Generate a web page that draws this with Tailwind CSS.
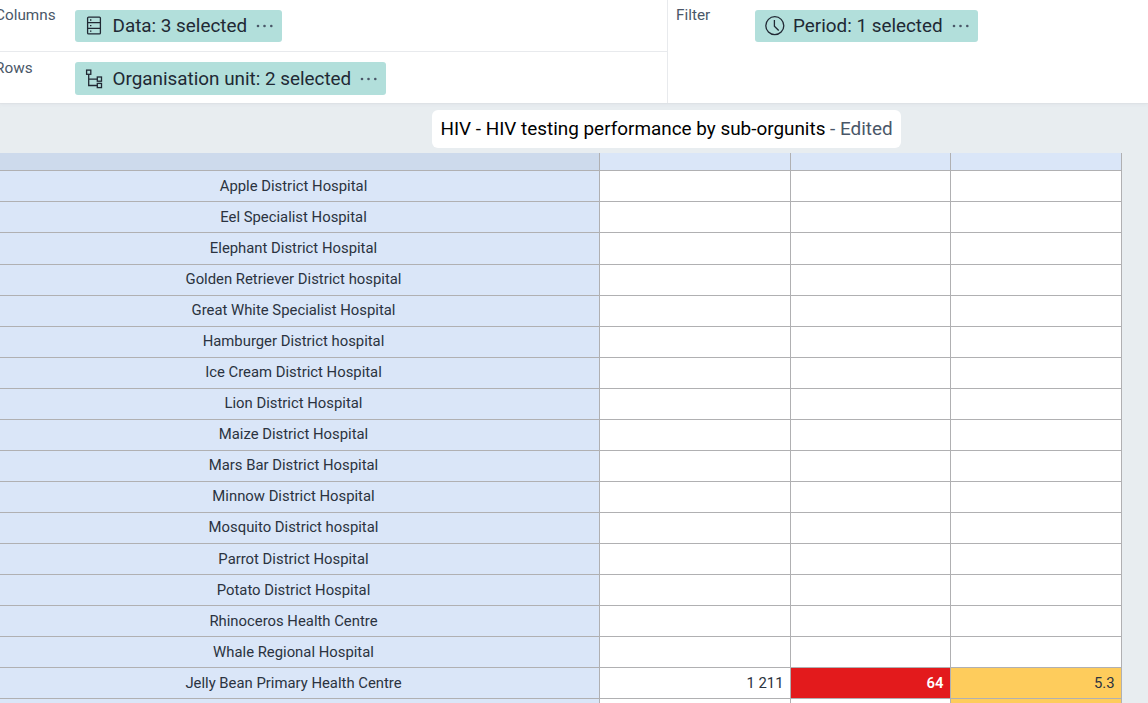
<!DOCTYPE html>
<html lang="en">
<head>
<meta charset="utf-8">
<title>HIV testing performance</title>
<script src="https://cdn.jsdelivr.net/npm/@tailwindcss/browser@4"></script>
</head>
<body class="h-[703px] w-[1148px] overflow-hidden bg-[#e8edf0] font-[Roboto,sans-serif] text-[#212934]">
<div class="flex h-[703px] flex-col overflow-hidden">
  <header class="flex h-[103px] shrink-0 bg-white shadow-[0_1px_3px_#d5dae080,0_1px_0_#e3e6ea]">
    <div class="w-[668px] border-r border-[#e8eaed]">
      <section class="flex h-[52px] border-b border-[#e8eaed]">
        <h2 class="-ml-[5px] w-20 shrink-0 pt-[5px] text-[15.3px] leading-5 text-[#4a5768]">Columns</h2>
        <button class="mt-[10px] flex h-8 w-[207px] items-center rounded-[3px] bg-[#b2dfdb] pl-[10px] text-[18.88px] whitespace-nowrap">
          <svg class="mr-[7.5px] size-5 shrink-0" viewBox="0 0 20 20" fill="none" stroke="#212934" stroke-width="1.3"><rect x="2.6" y="1.1" width="12.8" height="16.8" rx="1"/><path d="M2.6 6.7h12.8M2.6 12.3h12.8"/><path d="M5 4h1.4M5 9.6h1.4M5 15.2h1.4"/></svg>
          <span class="pt-px">Data: 3 selected</span>
          <svg class="ml-[9px] h-5 w-[18px]" viewBox="0 0 18 20" fill="#4a5768"><circle cx="2" cy="10" r="1.3"/><circle cx="8.5" cy="10" r="1.3"/><circle cx="15.3" cy="10" r="1.3"/></svg>
        </button>
      </section>
      <section class="flex h-[51px]">
        <h2 class="-ml-[5px] w-20 shrink-0 pt-[6px] text-[15.3px] leading-5 text-[#4a5768]">Rows</h2>
        <button class="mt-[10px] flex h-[33px] w-[311px] items-center rounded-[3px] bg-[#b2dfdb] pl-[10px] text-[18.88px] whitespace-nowrap">
          <svg class="mr-[7.5px] size-5 shrink-0" viewBox="0 0 20 20" fill="none" stroke="#212934" stroke-width="1.3"><rect x="1.6" y="1.1" width="4.2" height="4.2"/><rect x="12.3" y="8" width="4.2" height="4.2"/><rect x="12.3" y="14.4" width="4.2" height="4.2"/><path d="M3.7 5.3v11.2h8.6M3.7 10.1h8.6"/></svg>
          <span class="pt-px">Organisation unit: 2 selected</span>
          <svg class="ml-[9px] h-5 w-[18px]" viewBox="0 0 18 20" fill="#4a5768"><circle cx="2" cy="10" r="1.3"/><circle cx="8.5" cy="10" r="1.3"/><circle cx="15.3" cy="10" r="1.3"/></svg>
        </button>
      </section>
    </div>
    <section class="flex pl-2">
      <h2 class="w-[79px] shrink-0 pt-[5px] text-[15.3px] leading-5 text-[#4a5768]">Filter</h2>
      <button class="mt-[10px] flex h-8 w-[223px] items-center rounded-[3px] bg-[#b2dfdb] pl-[10px] text-[18.88px] whitespace-nowrap">
        <svg class="mr-2 size-5 shrink-0" viewBox="0 0 20 20" fill="none" stroke="#212934" stroke-width="1.3"><circle cx="9.8" cy="9.7" r="9"/><path d="M9.4 4v6.2l4.3 4.3"/></svg>
        <span class="pt-px">Period: 1 selected</span>
        <svg class="ml-[9.5px] h-5 w-[18px]" viewBox="0 0 18 20" fill="#4a5768"><circle cx="2" cy="10" r="1.3"/><circle cx="8.5" cy="10" r="1.3"/><circle cx="15.3" cy="10" r="1.3"/></svg>
      </button>
    </section>
  </header>

  <div class="h-[50px] shrink-0 pt-[7px] pl-[432px]">
    <h1 class="flex h-[38px] w-[469px] items-center rounded-[6px] bg-white pt-px pl-[8.5px] text-[18.9px] whitespace-pre text-black"><span>HIV - HIV testing performance by sub-orgunits</span><span class="text-[#4a5768]"> - Edited</span></h1>
  </div>

  <main id="table" class="w-[1122px] text-[14.85px] text-[#2b3340]">
    <div class="grid h-[18px] grid-cols-[600px_191px_160px_171px] *:border-r *:border-b *:border-[#b0b0b2]"><div class="bg-[#cddaec]"></div><div class="bg-[#dae6f8]"></div><div class="bg-[#dae6f8]"></div><div class="bg-[#dae6f8]"></div></div>
  </main>
</div>
<template id="row">
  <div class="grid h-[31px] grid-cols-[600px_191px_160px_171px] *:flex *:items-center *:justify-end *:border-r *:border-b *:border-[#b0b0b2] *:pr-[6.5px] nth-4:h-8">
    <div class="bg-[#dae6f8]"><span class="mr-[5.5px] w-[587px] text-center"></span></div><div class="bg-white"></div><div class="bg-white"></div><div class="bg-white"></div>
  </div>
</template>
<script>
  const names = ["Apple District Hospital", "Eel Specialist Hospital", "Elephant District Hospital", "Golden Retriever District hospital", "Great White Specialist Hospital", "Hamburger District hospital", "Ice Cream District Hospital", "Lion District Hospital", "Maize District Hospital", "Mars Bar District Hospital", "Minnow District Hospital", "Mosquito District hospital", "Parrot District Hospital", "Potato District Hospital", "Rhinoceros Health Centre", "Whale Regional Hospital", "Jelly Bean Primary Health Centre", ""];
  const table = document.getElementById("table");
  names.forEach((name, i) => {
    const row = document.getElementById("row").content.firstElementChild.cloneNode(true);
    const cells = row.children;
    cells[0].firstElementChild.textContent = name;
    if (i === 16) {
      cells[1].textContent = "1 211";
      cells[2].textContent = "64";
      cells[2].className = "bg-[#e31a1c] font-semibold text-white";
      cells[3].textContent = "5.3";
    }
    if (i >= 16) cells[3].className = "bg-[#fecc5c]";
    if (i > 2 && i < 12) row.classList.add("*:pb-px");
    table.append(row);
  });
</script>
</body>
</html>
